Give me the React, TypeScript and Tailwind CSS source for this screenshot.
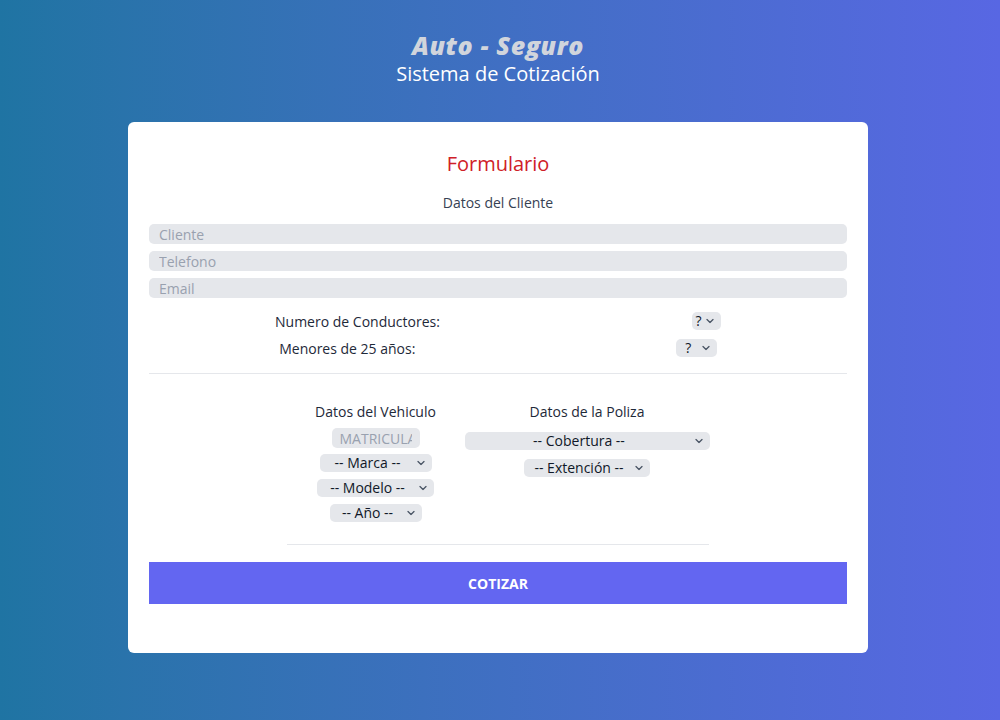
import type { ReactNode } from "react";

const FONT = "font-['Open_Sans','Noto_Sans',sans-serif]";

function Chevron() {
  return (
    <svg viewBox="0 0 8 5" className="pointer-events-none absolute right-[7px] top-1/2 h-[5px] w-[8px] -translate-y-1/2 text-gray-600" fill="none" stroke="currentColor" strokeWidth="1.3" strokeLinecap="round" strokeLinejoin="round">
      <path d="M1 1l3 3 3-3" />
    </svg>
  );
}

function Select({ width, children }: { width: string; children: ReactNode }) {
  return (
    <div className={`relative h-[18px] ${width}`}>
      <select className="block h-[18px] w-full appearance-none rounded-[5px] bg-gray-200 pr-4 text-center text-[14px] leading-[18px] text-gray-900 outline-none">
        {children}
      </select>
      <Chevron />
    </div>
  );
}

export default function App() {
  return (
    <main className={`min-h-screen w-full bg-gradient-to-r from-[#1f74a3] to-[#5867e3] pr-1 pt-[30px] ${FONT}`}>
      <header className="text-center">
        <h1 className="text-[25px] font-extrabold italic leading-[30px] tracking-[0.6px] text-gray-300">Auto - Seguro</h1>
        <p className="text-[20px] leading-[28px] text-white">Sistema de Cotización</p>
      </header>

      <section className="mx-auto mt-[34px] w-[740px] rounded-md bg-white px-[21px] pb-[49px] pt-[28px]">
        <h2 className="text-center text-[20px] leading-[28px] text-[#cf2027]">Formulario</h2>
        <p className="mt-[15px] text-center text-[14px] leading-5 text-gray-700">Datos del Cliente</p>

        <div className="mt-[11px] flex flex-col gap-[7px]">
          {["Cliente", "Telefono", "Email"].map((ph) => (
            <input
              key={ph}
              placeholder={ph}
              className="h-5 w-full rounded-[5px] bg-gray-200 px-[10px] text-[14px] text-gray-800 outline-none placeholder:text-gray-400"
            />
          ))}
        </div>

        <div className="mt-[12px] flex flex-col gap-[5px] text-[14px] text-gray-800">
          <div className="flex h-[22px] items-center justify-around">
            <span>Numero de Conductores:</span>
            <Select width="w-[29px]">
              <option>?</option>
            </Select>
          </div>
          <div className="flex h-[22px] items-center justify-around">
            <span>Menores de 25 años:</span>
            <Select width="w-[41px]">
              <option>?</option>
            </Select>
          </div>
        </div>

        <hr className="mt-[14px] border-gray-200" />

        <div className="mt-[28px] flex justify-center gap-[30px] pl-[30px] text-[14px] text-gray-800">
          <div className="flex w-[118px] flex-col items-center">
            <h3 className="whitespace-nowrap leading-5">Datos del Vehiculo</h3>
            <input
              placeholder="MATRICULA"
              className="mt-[6px] h-5 w-[88px] rounded-[5px] bg-gray-200 px-[8px] text-center text-[14px] outline-none placeholder:text-gray-400"
            />
            <div className="mt-[6px] flex flex-col items-center gap-[7px]">
              <Select width="w-[112px]">
                <option>-- Marca --</option>
              </Select>
              <Select width="w-[117px]">
                <option>-- Modelo --</option>
              </Select>
              <Select width="w-[92px]">
                <option>-- Año --</option>
              </Select>
            </div>
          </div>

          <div className="flex w-[245px] flex-col items-center">
            <h3 className="whitespace-nowrap leading-5">Datos de la Poliza</h3>
            <div className="mt-[10px] flex w-full flex-col items-center gap-[9px]">
              <Select width="w-[245px]">
                <option>-- Cobertura --</option>
              </Select>
              <Select width="w-[126px]">
                <option>-- Extención --</option>
              </Select>
            </div>
          </div>
        </div>

        <hr className="mx-auto mt-[22px] w-[422px] border-gray-200" />

        <button className="mt-[17px] h-[42px] w-full bg-[#6366f1] text-[14px] font-bold text-white">COTIZAR</button>
      </section>
    </main>
  );
}
